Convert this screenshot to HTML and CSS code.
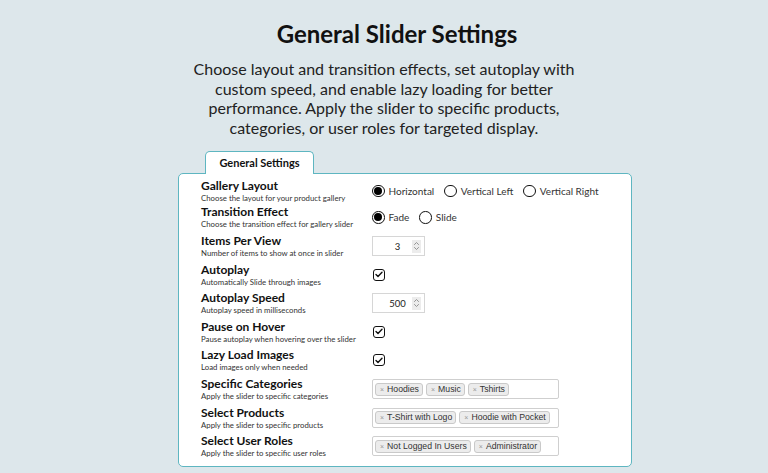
FILE: index.html
```html
<!DOCTYPE html>
<html lang="en">
  <head>
    <meta charset="UTF-8" />
    <meta name="viewport" content="width=device-width, initial-scale=1.0" />
    <title>General Slider Settings</title>
    <link rel="stylesheet" href="styles.css">
  </head>
  <body>
    <div class="page">
      <h1 class="pageTitle">General Slider Settings</h1>
      <p class="pageIntro">
        Choose layout and transition effects, set autoplay with custom speed,
        and enable lazy loading for better performance. Apply the slider to
        specific products, categories, or user roles for targeted display.
      </p>

      <div class="settingsPanel">
        <div class="tabs">
          <button class="tab active">General Settings</button>
        </div>
        <div class="settingsCard">
          <div class="row">
            <div class="label">
              <h3>Gallery Layout</h3>
              <p>Choose the layout for your product gallery</p>
            </div>
            <div class="control">
              <label class="radio"><span class="dot checked"></span>Horizontal</label>
              <label class="radio"><span class="dot"></span>Vertical Left</label>
              <label class="radio"><span class="dot"></span>Vertical Right</label>
            </div>
          </div>

          <div class="row">
            <div class="label">
              <h3>Transition Effect</h3>
              <p>Choose the transition effect for gallery slider</p>
            </div>
            <div class="control">
              <label class="radio"><span class="dot checked"></span>Fade</label>
              <label class="radio"><span class="dot"></span>Slide</label>
            </div>
          </div>

          <div class="row">
            <div class="label">
              <h3>Items Per View</h3>
              <p>Number of items to show at once in slider</p>
            </div>
            <div class="control">
              <div class="numberInput">
                <span class="value">3</span>
                <span class="spinner">
                  <svg width="7" height="10" viewBox="0 0 7 10"><path d="M1.2 3.8l2.3-2.3 2.3 2.3M1.2 6.2l2.3 2.3 2.3-2.3" fill="none" stroke="#8a8a8a" stroke-width="0.9"/></svg>
                </span>
              </div>
            </div>
          </div>

          <div class="row">
            <div class="label">
              <h3>Autoplay</h3>
              <p>Automatically Slide through images</p>
            </div>
            <div class="control">
              <span class="checkbox"><svg width="8" height="7" viewBox="0 0 8 7"><path d="M1 3.5l2 2L7 1.3" fill="none" stroke="#111" stroke-width="1.4" stroke-linecap="round" stroke-linejoin="round"/></svg></span>
            </div>
          </div>

          <div class="row">
            <div class="label">
              <h3>Autoplay Speed</h3>
              <p>Autoplay speed in milliseconds</p>
            </div>
            <div class="control">
              <div class="numberInput">
                <span class="value">500</span>
                <span class="spinner">
                  <svg width="7" height="10" viewBox="0 0 7 10"><path d="M1.2 3.8l2.3-2.3 2.3 2.3M1.2 6.2l2.3 2.3 2.3-2.3" fill="none" stroke="#8a8a8a" stroke-width="0.9"/></svg>
                </span>
              </div>
            </div>
          </div>

          <div class="row">
            <div class="label">
              <h3>Pause on Hover</h3>
              <p>Pause autoplay when hovering over the slider</p>
            </div>
            <div class="control">
              <span class="checkbox"><svg width="8" height="7" viewBox="0 0 8 7"><path d="M1 3.5l2 2L7 1.3" fill="none" stroke="#111" stroke-width="1.4" stroke-linecap="round" stroke-linejoin="round"/></svg></span>
            </div>
          </div>

          <div class="row">
            <div class="label">
              <h3>Lazy Load Images</h3>
              <p>Load images only when needed</p>
            </div>
            <div class="control">
              <span class="checkbox"><svg width="8" height="7" viewBox="0 0 8 7"><path d="M1 3.5l2 2L7 1.3" fill="none" stroke="#111" stroke-width="1.4" stroke-linecap="round" stroke-linejoin="round"/></svg></span>
            </div>
          </div>

          <div class="row">
            <div class="label">
              <h3>Specific Categories</h3>
              <p>Apply the slider to specific categories</p>
            </div>
            <div class="control">
              <div class="tagSelect">
                <span class="tag"><i>×</i>Hoodies</span>
                <span class="tag"><i>×</i>Music</span>
                <span class="tag"><i>×</i>Tshirts</span>
              </div>
            </div>
          </div>

          <div class="row">
            <div class="label">
              <h3>Select Products</h3>
              <p>Apply the slider to specific products</p>
            </div>
            <div class="control">
              <div class="tagSelect">
                <span class="tag"><i>×</i>T-Shirt with Logo</span>
                <span class="tag"><i>×</i>Hoodie with Pocket</span>
              </div>
            </div>
          </div>

          <div class="row">
            <div class="label">
              <h3>Select User Roles</h3>
              <p>Apply the slider to specific user roles</p>
            </div>
            <div class="control">
              <div class="tagSelect">
                <span class="tag"><i>×</i>Not Logged In Users</span>
                <span class="tag"><i>×</i>Administrator</span>
              </div>
            </div>
          </div>
        </div>
      </div>
    </div>
  </body>
</html>
```

FILE: styles.css
```css
body {
  margin: 0;
  background-color: #dde7eb;
  font-family: "Lato", "Noto Sans", sans-serif;
  color: #111;
}

.page {
  display: flex;
  flex-direction: column;
  align-items: center;
  padding-top: 20px;
}

.pageTitle {
  margin: 0 0 0 26px;
  font-size: 24px;
  font-weight: 700;
  line-height: 28px;
}

.pageIntro {
  margin: 11px 0 0;
  width: 420px;
  text-align: center;
  font-size: 16px;
  line-height: 19.7px;
  color: #222;
}

.settingsPanel {
  margin: 13px 0 0 42px;
  width: 454px;
}

.tabs {
  display: flex;
  padding-left: 27px;
}

.tab {
  font-family: inherit;
  font-size: 11px;
  font-weight: 700;
  color: #111;
  background: #fff;
  border: 1px solid #5eb6c1;
  border-bottom: none;
  border-radius: 5px 5px 0 0;
  height: 23px;
  width: 109px;
  padding: 0;
  margin-bottom: -1px;
  position: relative;
}

.settingsCard {
  background: #fff;
  border: 1px solid #5eb6c1;
  border-radius: 5px;
  padding: 5px 22px 5px;
}

.row {
  display: grid;
  grid-template-columns: 171px 1fr;
  align-items: center;
  min-height: 28.6px;
}

.row:first-child {
  min-height: 24px;
}

.row:nth-child(2) {
  min-height: 29px;
}

.label h3 {
  margin: 0;
  font-size: 12px;
  line-height: 14px;
  font-weight: 700;
}

.label p {
  margin: 0;
  font-size: 7.8px;
  line-height: 10px;
  color: #333;
}

.control {
  display: flex;
  align-items: center;
  gap: 10px;
  font-size: 10px;
  color: #333;
}

.radio {
  display: flex;
  align-items: center;
  gap: 4px;
}

.dot {
  width: 10.5px;
  height: 10.5px;
  border: 1.3px solid #111;
  border-radius: 50%;
  display: inline-flex;
  align-items: center;
  justify-content: center;
}

.dot.checked::after {
  content: "";
  width: 8px;
  height: 8px;
  border-radius: 50%;
  background: #000;
}

.numberInput {
  display: flex;
  align-items: center;
  justify-content: space-between;
  width: 53px;
  height: 20px;
  border: 1px solid #d6d6d6;
  box-sizing: border-box;
  padding: 0 3px 0 10px;
  font-size: 9.5px;
  color: #222;
}

.numberInput .value {
  flex: 1;
  text-align: center;
}

.spinner {
  width: 9px;
  height: 13px;
  background: #ececec;
  display: flex;
  align-items: center;
  justify-content: center;
}

.checkbox {
  width: 10px;
  height: 10px;
  border: 1.3px solid #111;
  border-radius: 3px;
  display: inline-flex;
  align-items: center;
  justify-content: center;
  margin-left: 1px;
}

.tagSelect {
  width: 187px;
  height: 20px;
  box-sizing: border-box;
  border: 1px solid #cfcfcf;
  border-radius: 2px;
  display: flex;
  align-items: center;
  gap: 3px;
  padding: 0 2px;
}

.tag {
  font-family: "Liberation Sans", Arial, sans-serif;
  font-size: 8.7px;
  line-height: 11px;
  color: #333;
  background: #ececec;
  border: 1px solid #c9c9c9;
  border-radius: 3px;
  padding: 0 3px 0 4px;
  white-space: nowrap;
}

.tag i {
  font-style: normal;
  font-size: 7px;
  color: #999;
  margin-right: 3px;
}
```
